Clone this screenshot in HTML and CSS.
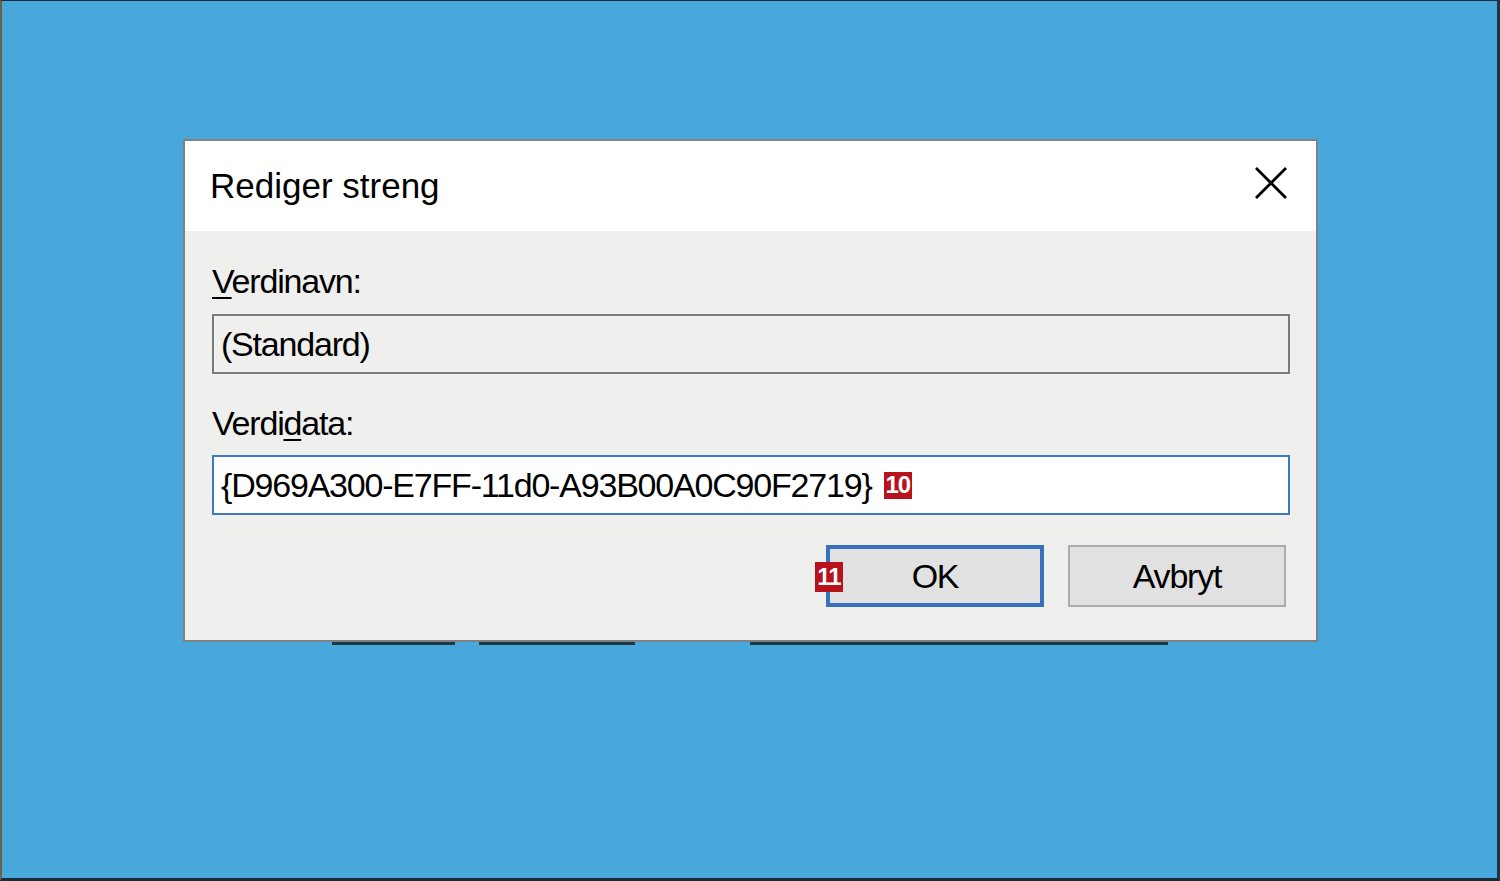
FILE: index.html
```html
<!DOCTYPE html>
<html>
<head>
<meta charset="utf-8" />
<title>Rediger streng</title>
<link rel="stylesheet" href="styles.css">
</head>
<body>

<div class="screen">
  <div class="dialog">
    <div class="titlebar">
      <span class="title">Rediger streng</span>
      <svg class="close" width="34" height="34" viewBox="0 0 34 34">
        <path d="M2 2 L32 32 M32 2 L2 32" stroke="#000" stroke-width="2.8" fill="none" />
      </svg>
    </div>
    <div class="content">
      <label class="label first"><u>V</u>erdinavn:</label>
      <div class="textbox readonly">(Standard)</div>
      <label class="label second">Verdi<u>d</u>ata:</label>
      <div class="textbox focused">{D969A300-E7FF-11d0-A93B00A0C90F2719} <span class="badge">10</span></div>
      <div class="buttons">
        <button class="btn default"><span class="badge badge-over">11</span>OK</button>
        <button class="btn">Avbryt</button>
      </div>
    </div>
  </div>
  <div class="backedge"></div>
</div>

</body>
</html>
```

FILE: styles.css
```css
html, body {
  margin: 0;
  padding: 0;
}
body {
  background: #48a8dc;
  font-family: "Liberation Sans", Arial, sans-serif;
  color: #000;
}
.screen {
  box-sizing: border-box;
  height: 881px;
  background: #48a8dc;
  border-top: 1px solid #1d2c34;
  border-left: 2px solid #6e6340;
  border-right: 3px solid #1e3442;
  border-bottom: 3px solid #1b2b35;
  padding-top: 138px;
  padding-left: 181px;
}
.dialog {
  box-sizing: border-box;
  width: 1135px;
  border: 2px solid #7f8284;
  background: #efefed;
}
.titlebar {
  display: flex;
  align-items: center;
  justify-content: space-between;
  height: 90px;
  background: #fff;
  padding: 0 28px 0 25px;
}
.title {
  font-size: 35px;
  line-height: 40px;
}
.close {
  margin-bottom: 7px;
}
.content {
  display: flex;
  flex-direction: column;
  padding: 32px 26px 33px 27px;
  font-size: 34px;
  letter-spacing: -1.2px;
}
.label {
  line-height: 36px;
}
.label u {
  text-decoration-thickness: 2px;
  text-underline-offset: 4px;
}
.label.first {
  margin-bottom: 15px;
}
.label.second {
  margin-top: 31px;
  margin-bottom: 14px;
}
.textbox {
  box-sizing: border-box;
  display: flex;
  align-items: center;
  height: 60px;
  padding-left: 7px;
  white-space: pre;
}
.textbox.readonly {
  border: 2px solid #7a7a7a;
  background: #efefed;
}
.textbox.focused {
  border: 2px solid #3d79c0;
  background: #fff;
}
.badge {
  display: inline-flex;
  align-items: center;
  justify-content: center;
  width: 28px;
  height: 27px;
  margin-left: 4px;
  background: #b8121d;
  color: #fff;
  font-weight: bold;
  font-size: 24px;
  letter-spacing: -1px;
  line-height: 1;
}
.buttons {
  display: flex;
  justify-content: flex-end;
  gap: 24px;
  margin-top: 30px;
  margin-right: 4px;
}
.btn {
  position: relative;
  box-sizing: border-box;
  width: 218px;
  height: 62px;
  padding: 0;
  background: #e1e1e1;
  border: 2px solid #adadad;
  font-family: "Liberation Sans", Arial, sans-serif;
  font-size: 34px;
  letter-spacing: -1.2px;
  color: #000;
}
.btn.default {
  border: 4px solid #3672bb;
}
.badge-over {
  position: absolute;
  left: -15px;
  top: 13px;
  height: 30px;
  margin: 0;
}
.backedge {
  width: 836px;
  height: 3px;
  margin-left: 149px;
  background: linear-gradient(to right,
    #1c3a44 0, #1c3a44 123px,
    transparent 123px, transparent 147px,
    #1c3a44 147px, #1c3a44 303px,
    transparent 303px, transparent 418px,
    #1c3a44 418px, #1c3a44 836px);
}
```
